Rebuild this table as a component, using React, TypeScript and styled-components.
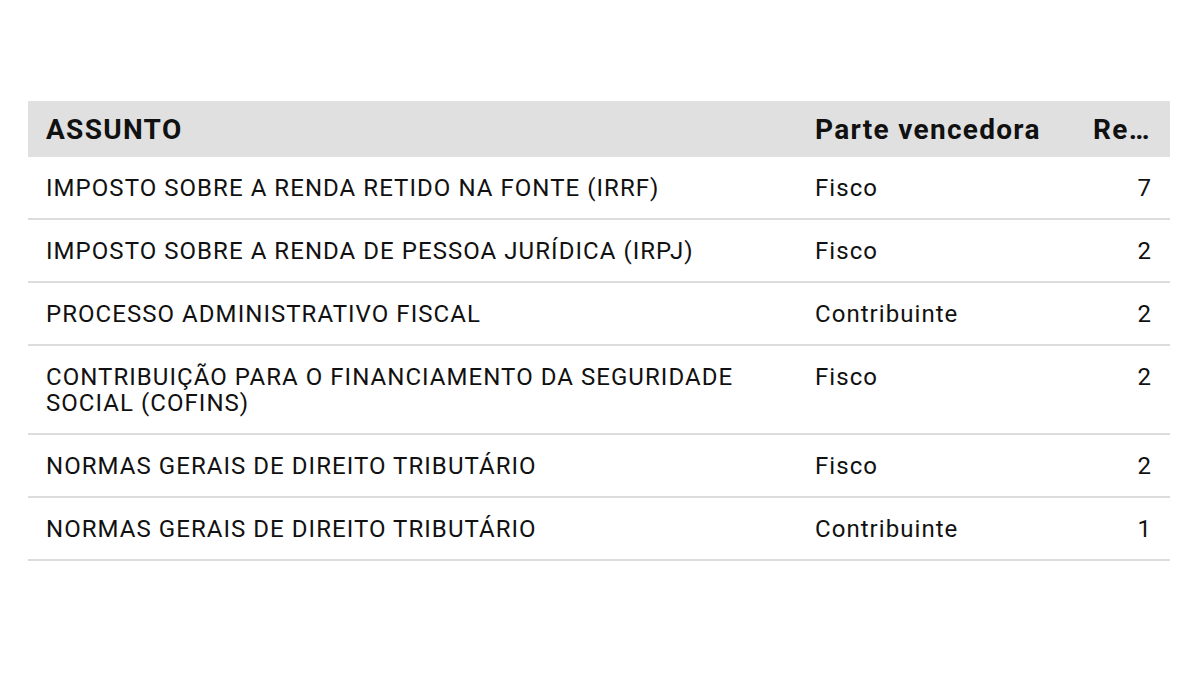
import styled, { createGlobalStyle } from 'styled-components';

const GlobalStyle = createGlobalStyle`
    html, body {
        margin: 0;
        padding: 0;
        background: #ffffff;
        font-family: Roboto, "Liberation Sans", sans-serif;
    }
`;

const Page = styled.div`
    width: 1200px;
    height: 675px;
    padding: 101px 30px 0 28px;
    box-sizing: border-box;
`;

const Table = styled.table`
    width: 1142px;
    border-collapse: collapse;
    table-layout: fixed;
    color: #111111;
`;

const HeadCell = styled.th<{ $align?: string }>`
    height: 56px;
    padding: 0 18px;
    background-color: #e0e0e0;
    font-size: 28px;
    font-weight: 700;
    letter-spacing: 1.3px;
    text-align: ${(p) => p.$align || 'left'};
    white-space: nowrap;
    overflow: hidden;
    text-overflow: ellipsis;
`;

const Row = styled.tr`
    border-bottom: 2px solid #dcdcdc;
`;

const Cell = styled.td<{ $align?: string }>`
    padding: 18px 18px 17px;
    font-size: 24px;
    line-height: 26px;
    letter-spacing: 1.05px;
    vertical-align: top;
    text-align: ${(p) => p.$align || 'left'};
`;

const rows = [
    { subject: 'IMPOSTO SOBRE A RENDA RETIDO NA FONTE (IRRF)', party: 'Fisco', count: 7 },
    { subject: 'IMPOSTO SOBRE A RENDA DE PESSOA JURÍDICA (IRPJ)', party: 'Fisco', count: 2 },
    { subject: 'PROCESSO ADMINISTRATIVO FISCAL', party: 'Contribuinte', count: 2 },
    { subject: 'CONTRIBUIÇÃO PARA O FINANCIAMENTO DA SEGURIDADE SOCIAL (COFINS)', party: 'Fisco', count: 2 },
    { subject: 'NORMAS GERAIS DE DIREITO TRIBUTÁRIO', party: 'Fisco', count: 2 },
    { subject: 'NORMAS GERAIS DE DIREITO TRIBUTÁRIO', party: 'Contribuinte', count: 1 },
];

const App = () => {
    return (
        <Page>
            <GlobalStyle />
            <Table>
                <colgroup>
                    <col style={{ width: 769 }} />
                    <col style={{ width: 278 }} />
                    <col style={{ width: 95 }} />
                </colgroup>
                <thead>
                    <tr>
                        <HeadCell>ASSUNTO</HeadCell>
                        <HeadCell>Parte vencedora</HeadCell>
                        <HeadCell>Recorrências</HeadCell>
                    </tr>
                </thead>
                <tbody>
                    {rows.map((r, i) => (
                        <Row key={i}>
                            <Cell>{r.subject}</Cell>
                            <Cell>{r.party}</Cell>
                            <Cell $align="right">{r.count}</Cell>
                        </Row>
                    ))}
                </tbody>
            </Table>
        </Page>
    );
};

export default App;
